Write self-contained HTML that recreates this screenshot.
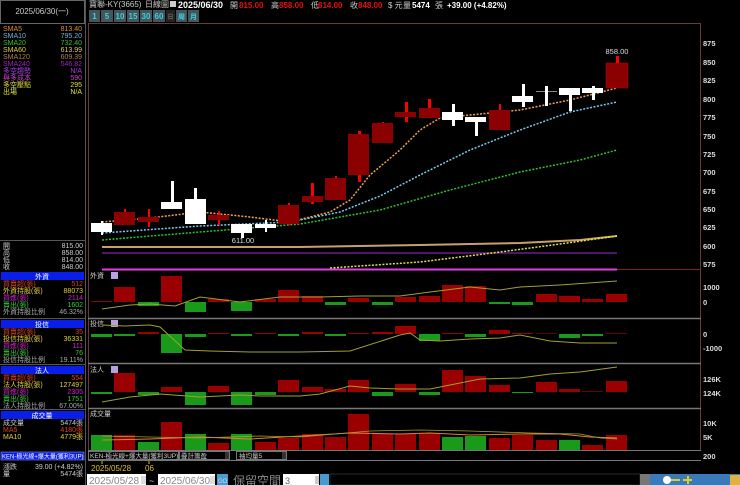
<!DOCTYPE html>
<html><head><meta charset="utf-8"><style>
body{margin:0;background:#000;width:740px;height:485px;overflow:hidden;font-family:"Liberation Sans","Noto Sans CJK TC",sans-serif;}
svg text{font-family:"Liberation Sans","Noto Sans CJK TC",sans-serif;}
</style></head><body>
<svg width="740" height="485" viewBox="0 0 740 485" xmlns="http://www.w3.org/2000/svg" style="position:absolute;left:0;top:0">
<rect width="740" height="485" fill="#000"/>
<!-- left panel borders -->
<rect x="0.5" y="0.5" width="84" height="23" fill="none" stroke="#666"/>
<text x="42" y="14" fill="#ccc" font-size="8" text-anchor="middle">2025/06/30(一)</text>
<line x1="85.5" y1="0" x2="85.5" y2="485" stroke="#555"/>
<line x1="0" y1="240.5" x2="85" y2="240.5" stroke="#555"/>
<g font-size="7">
<text x="3" y="31" fill="#e08a30">SMA5</text><text x="82" y="31" fill="#e08a30" text-anchor="end">813.40</text>
<text x="3" y="38" fill="#6fb6e0">SMA10</text><text x="82" y="38" fill="#6fb6e0" text-anchor="end">795.20</text>
<text x="3" y="45" fill="#30c030">SMA20</text><text x="82" y="45" fill="#30c030" text-anchor="end">732.40</text>
<text x="3" y="52" fill="#e0d040">SMA60</text><text x="82" y="52" fill="#e0d040" text-anchor="end">613.99</text>
<text x="3" y="59" fill="#b08050">SMA120</text><text x="82" y="59" fill="#b08050" text-anchor="end">609.39</text>
<text x="3" y="66" fill="#a020c0">SMA240</text><text x="82" y="66" fill="#a020c0" text-anchor="end">546.82</text>
<text x="3" y="73" fill="#a040e0">多空趨勢</text><text x="82" y="73" fill="#a040e0" text-anchor="end">N/A</text>
<text x="3" y="80" fill="#d040d0">與多成本</text><text x="82" y="80" fill="#d040d0" text-anchor="end">590</text>
<text x="3" y="87" fill="#e0e040">多空壓點</text><text x="82" y="87" fill="#e0e040" text-anchor="end">295</text>
<text x="3" y="94" fill="#e0e040">出場</text><text x="82" y="94" fill="#e0e040" text-anchor="end">N/A</text>
<text x="3" y="248" fill="#ccc">開</text><text x="83" y="248" fill="#ccc" text-anchor="end">815.00</text>
<text x="3" y="255" fill="#ccc">高</text><text x="83" y="255" fill="#ccc" text-anchor="end">858.00</text>
<text x="3" y="262" fill="#ccc">低</text><text x="83" y="262" fill="#ccc" text-anchor="end">814.00</text>
<text x="3" y="269" fill="#ccc">收</text><text x="83" y="269" fill="#ccc" text-anchor="end">848.00</text>
</g>
<!-- left sub sections -->
<g font-size="7">
<rect x="1" y="272" width="83" height="8" fill="#0a1ee8"/><text x="42" y="279" fill="#fff" text-anchor="middle">外資</text>
<text x="3" y="286" fill="#e04020">買賣超(張)</text><text x="83" y="286" fill="#e04020" text-anchor="end">512</text>
<text x="3" y="293" fill="#e0d040">外資持股(張)</text><text x="83" y="293" fill="#e0d040" text-anchor="end">88073</text>
<text x="3" y="300" fill="#d020d0">買進(張)</text><text x="83" y="300" fill="#d020d0" text-anchor="end">2114</text>
<text x="3" y="307" fill="#30d030">賣出(張)</text><text x="83" y="307" fill="#30d030" text-anchor="end">1602</text>
<text x="3" y="314" fill="#aaa">外資持股比例</text><text x="83" y="314" fill="#aaa" text-anchor="end">46.32%</text>
<line x1="0" y1="318.5" x2="85" y2="318.5" stroke="#555"/>
<rect x="1" y="320" width="83" height="8" fill="#0a1ee8"/><text x="42" y="327" fill="#fff" text-anchor="middle">投信</text>
<text x="3" y="334" fill="#e04020">買賣超(張)</text><text x="83" y="334" fill="#e04020" text-anchor="end">35</text>
<text x="3" y="341" fill="#e0d040">投信持股(張)</text><text x="83" y="341" fill="#e0d040" text-anchor="end">36331</text>
<text x="3" y="348" fill="#d020d0">買進(張)</text><text x="83" y="348" fill="#d020d0" text-anchor="end">111</text>
<text x="3" y="355" fill="#30d030">賣出(張)</text><text x="83" y="355" fill="#30d030" text-anchor="end">76</text>
<text x="3" y="362" fill="#aaa">投信持股比例</text><text x="83" y="362" fill="#aaa" text-anchor="end">19.11%</text>
<line x1="0" y1="364.5" x2="85" y2="364.5" stroke="#555"/>
<rect x="1" y="366" width="83" height="8" fill="#0a1ee8"/><text x="42" y="373" fill="#fff" text-anchor="middle">法人</text>
<text x="3" y="380" fill="#e04020">買賣超(張)</text><text x="83" y="380" fill="#e04020" text-anchor="end">554</text>
<text x="3" y="387" fill="#e0d040">法人持股(張)</text><text x="83" y="387" fill="#e0d040" text-anchor="end">127497</text>
<text x="3" y="394" fill="#d020d0">買進(張)</text><text x="83" y="394" fill="#d020d0" text-anchor="end">2305</text>
<text x="3" y="401" fill="#30d030">賣出(張)</text><text x="83" y="401" fill="#30d030" text-anchor="end">1751</text>
<text x="3" y="408" fill="#aaa">法人持股比例</text><text x="83" y="408" fill="#aaa" text-anchor="end">67.00%</text>
<line x1="0" y1="409.5" x2="85" y2="409.5" stroke="#555"/>
<rect x="1" y="411" width="83" height="8" fill="#0a1ee8"/><text x="42" y="418" fill="#fff" text-anchor="middle">成交量</text>
<text x="3" y="425" fill="#ccc">成交量</text><text x="83" y="425" fill="#ccc" text-anchor="end">5474張</text>
<text x="3" y="432" fill="#e04020">MA5</text><text x="83" y="432" fill="#e04020" text-anchor="end">4180張</text>
<text x="3" y="439" fill="#e0d040">MA10</text><text x="83" y="439" fill="#e0d040" text-anchor="end">4779張</text>
<rect x="1" y="452" width="83" height="8" fill="#0a1ee8" stroke="#88f" stroke-width="0.6"/><text x="2" y="458.5" fill="#fff" font-size="6">KEN-極光線+爆大量(獲利3UP)</text>
<text x="3" y="469" fill="#ccc">漲跌</text><text x="83" y="469" fill="#ccc" text-anchor="end">39.00 (+4.82%)</text>
<text x="3" y="476" fill="#ccc">量</text><text x="83" y="476" fill="#ccc" text-anchor="end">5474張</text>
</g>

<!-- title row -->
<g font-size="8">
<text x="89" y="7" fill="#ccc">寶聯-KY(3665)</text>
<text x="145" y="7" fill="#ccc">日線圖</text>
<rect x="170" y="1" width="6" height="6" fill="#ccc"/>
<text x="178" y="8" fill="#fff" font-weight="bold" font-size="9">2025/06/30</text>
<text x="230" y="8" fill="#ccc">開</text><text x="239" y="8" fill="#e01010" font-weight="bold">815.00</text>
<text x="271" y="8" fill="#ccc">高</text><text x="279" y="8" fill="#e01010" font-weight="bold">858.00</text>
<text x="311" y="8" fill="#ccc">低</text><text x="318" y="8" fill="#e01010" font-weight="bold">814.00</text>
<text x="350" y="8" fill="#ccc">收</text><text x="358" y="8" fill="#e01010" font-weight="bold">848.00</text>
<text x="388" y="8" fill="#ccc">$ 元</text>
<text x="403" y="8" fill="#ccc">量</text><text x="412" y="8" fill="#fff" font-weight="bold">5474</text>
<text x="435" y="8" fill="#ccc">張</text>
<text x="447" y="8" fill="#fff" font-weight="bold">+39.00 (+4.82%)</text>
</g>
<!-- buttons -->
<g font-size="8" font-weight="bold" text-anchor="middle">
<rect x="89" y="10" width="11" height="12" fill="#44555c"/><text x="94.5" y="19" fill="#3ad0e0">1</text>
<rect x="101" y="10" width="12" height="12" fill="#44555c"/><text x="107" y="19" fill="#3ad0e0">5</text>
<rect x="114" y="10" width="12" height="12" fill="#44555c"/><text x="120" y="19" fill="#3ad0e0">10</text>
<rect x="127" y="10" width="12" height="12" fill="#44555c"/><text x="133" y="19" fill="#3ad0e0">15</text>
<rect x="140" y="10" width="12" height="12" fill="#44555c"/><text x="146" y="19" fill="#3ad0e0">30</text>
<rect x="153" y="10" width="12" height="12" fill="#44555c"/><text x="159" y="19" fill="#3ad0e0">60</text>
<rect x="166" y="10" width="9" height="12" fill="#222"/><text x="170.5" y="19" fill="#666" font-size="6">日</text>
<rect x="176" y="10" width="11" height="12" fill="#44555c"/><text x="181.5" y="19" fill="#3ad0e0" font-size="7">周</text>
<rect x="188" y="10" width="11" height="12" fill="#44555c"/><text x="193.5" y="19" fill="#3ad0e0" font-size="7">月</text>
</g>

<!-- chart frame -->
<rect x="88.5" y="23.5" width="612" height="427" fill="none" stroke="#6a3a3a"/>
<line x1="88" y1="318.5" x2="701" y2="318.5" stroke="#777" stroke-width="1.5"/>
<line x1="88" y1="363.5" x2="701" y2="363.5" stroke="#777" stroke-width="1.5"/>
<line x1="88" y1="408.5" x2="701" y2="408.5" stroke="#777" stroke-width="1.5"/>
<line x1="88" y1="450.5" x2="701" y2="450.5" stroke="#777"/>
<line x1="88" y1="460.5" x2="701" y2="460.5" stroke="#777"/>
<!-- right axis -->
<g font-size="7.5" fill="#ddd" font-weight="bold">
<text x="703" y="46">875</text><text x="703" y="65">850</text><text x="703" y="83">825</text><text x="703" y="102">800</text><text x="703" y="120">775</text><text x="703" y="139">750</text><text x="703" y="157">725</text><text x="703" y="175">700</text><text x="703" y="194">675</text><text x="703" y="212">650</text><text x="703" y="230">625</text><text x="703" y="249">600</text><text x="703" y="267">575</text>
<text x="703" y="290">1000</text><text x="703" y="305">0</text>
<text x="703" y="337">0</text><text x="703" y="351">-1000</text>
<text x="703" y="382">126K</text><text x="703" y="396">124K</text>
<text x="703" y="426">10K</text><text x="703" y="440">5K</text><text x="703" y="459">200</text>
</g>

<!-- MA lines main -->
<line x1="102" y1="253" x2="617" y2="253" stroke="#6a1a8a" stroke-width="1.5"/>
<polyline points="102,247 300,247 420,245 520,243 580,240 617,236" fill="none" stroke="#c8a070" stroke-width="2"/>
<polyline points="330,268 420,262 500,252 560,244 617,236" fill="none" stroke="#e0e040" stroke-width="1.5" stroke-dasharray="2,1.5"/>
<polyline points="102,240 200,232 300,224 380,210 450,190 520,172 580,160 617,150" fill="none" stroke="#30c030" stroke-width="1.5" stroke-dasharray="2,1.5"/>
<polyline points="102,233 200,226 290,222 340,212 380,196 420,175 470,150 520,130 570,112 617,102" fill="none" stroke="#7ac8f0" stroke-width="1.5" stroke-dasharray="2,1.5"/>
<polyline points="102,222 150,218 200,212 250,217 290,222 330,212 350,200 370,175 400,150 420,130 440,118 470,115 520,110 570,100 617,88" fill="none" stroke="#f0a050" stroke-width="1.5" stroke-dasharray="2,1.5"/>
<line x1="102" y1="269.5" x2="617" y2="269.5" stroke="#e040e0" stroke-width="2"/>
<line x1="617" y1="269.5" x2="700" y2="269.5" stroke="#802020"/>

<!-- candles -->
<g>
<rect x="101" y="221" width="2" height="14" fill="#fff"/><rect x="91" y="223" width="21" height="9" fill="#fff"/>
<rect x="124" y="209" width="2" height="16" fill="#f00"/><rect x="114" y="212" width="21" height="13" fill="#8b0000"/>
<rect x="148" y="209" width="2" height="18" fill="#f00"/><rect x="138" y="217" width="21" height="5" fill="#8b0000"/>
<rect x="171" y="181" width="3" height="25" fill="#fff"/><rect x="161" y="202" width="21" height="7" fill="#fff"/>
<rect x="194" y="188" width="3" height="15" fill="#fff"/><rect x="185" y="199" width="21" height="25" fill="#fff"/>
<rect x="218" y="211" width="2" height="14" fill="#f00"/><rect x="208" y="215" width="21" height="5" fill="#8b0000"/>
<rect x="241" y="224" width="3" height="14" fill="#fff"/><rect x="231" y="224" width="21" height="9" fill="#fff"/>
<rect x="265" y="220" width="2" height="12" fill="#fff"/><rect x="255" y="224" width="21" height="4" fill="#fff"/>
<rect x="288" y="203" width="2" height="22" fill="#f00"/><rect x="278" y="205" width="21" height="19" fill="#8b0000"/>
<rect x="311" y="183" width="3" height="21" fill="#f00"/><rect x="302" y="196" width="21" height="6" fill="#8b0000"/>
<rect x="335" y="176" width="2" height="24" fill="#f00"/><rect x="325" y="178" width="21" height="22" fill="#8b0000"/>
<rect x="358" y="131" width="3" height="51" fill="#f00"/><rect x="348" y="134" width="21" height="41" fill="#8b0000"/>
<rect x="382" y="122" width="2" height="21" fill="#f00"/><rect x="372" y="123" width="21" height="20" fill="#8b0000"/>
<rect x="405" y="102" width="3" height="20" fill="#f00"/><rect x="395" y="112" width="21" height="5" fill="#8b0000"/>
<rect x="428" y="99" width="3" height="19" fill="#f00"/><rect x="419" y="108" width="21" height="10" fill="#8b0000"/>
<rect x="452" y="104" width="3" height="22" fill="#fff"/><rect x="442" y="112" width="21" height="8" fill="#fff"/>
<rect x="475" y="117" width="3" height="19" fill="#fff"/><rect x="465" y="117" width="21" height="5" fill="#fff"/>
<rect x="499" y="104" width="2" height="26" fill="#f00"/><rect x="489" y="110" width="21" height="20" fill="#8b0000"/>
<rect x="522" y="84" width="3" height="23" fill="#fff"/><rect x="512" y="96" width="21" height="6" fill="#fff"/>
<rect x="536" y="91" width="21" height="1" fill="#888"/><rect x="545" y="86" width="3" height="20" fill="#fff"/>
<rect x="569" y="88" width="3" height="23" fill="#fff"/><rect x="559" y="88" width="21" height="7" fill="#fff"/>
<rect x="592" y="86" width="3" height="14" fill="#fff"/><rect x="582" y="88" width="21" height="5" fill="#fff"/>
<rect x="616" y="56" width="3" height="8" fill="#f00"/><rect x="606" y="63" width="22" height="25" fill="#8b0000" stroke="#b00" stroke-width="0.5"/>
</g>
<text x="617" y="54" fill="#ddd" font-size="7.5" text-anchor="middle">858.00</text>
<text x="243" y="243" fill="#ddd" font-size="7.5" text-anchor="middle">611.00</text>

<!-- 外資 panel -->
<text x="90" y="278" fill="#ccc" font-size="7">外資</text><rect x="111" y="272" width="7" height="7" fill="#b9a0e0"/>
<g>
<rect x="91" y="301" width="21" height="1" fill="#8b0000"/>
<rect x="114" y="287" width="21" height="15" fill="#9a0000"/>
<rect x="138" y="302" width="21" height="4" fill="#1a9a1a"/>
<rect x="161" y="276" width="21" height="26" fill="#9a0000"/>
<rect x="185" y="302" width="21" height="10" fill="#1a9a1a"/>
<rect x="208" y="299" width="21" height="3" fill="#9a0000"/>
<rect x="231" y="302" width="21" height="9" fill="#1a9a1a"/>
<rect x="255" y="299" width="21" height="3" fill="#9a0000"/>
<rect x="278" y="290" width="21" height="12" fill="#9a0000"/>
<rect x="302" y="296" width="21" height="6" fill="#9a0000"/>
<rect x="325" y="302" width="21" height="3" fill="#1a9a1a"/>
<rect x="348" y="298" width="21" height="4" fill="#9a0000"/>
<rect x="372" y="302" width="21" height="3" fill="#1a9a1a"/>
<rect x="395" y="297" width="21" height="5" fill="#9a0000"/>
<rect x="419" y="296" width="21" height="6" fill="#9a0000"/>
<rect x="442" y="285" width="21" height="17" fill="#9a0000"/>
<rect x="465" y="286" width="21" height="16" fill="#9a0000"/>
<rect x="489" y="302" width="21" height="2" fill="#1a9a1a"/>
<rect x="512" y="302" width="21" height="3" fill="#1a9a1a"/>
<rect x="536" y="294" width="21" height="8" fill="#9a0000"/>
<rect x="559" y="296" width="21" height="6" fill="#9a0000"/>
<rect x="582" y="299" width="21" height="3" fill="#9a0000"/>
<rect x="606" y="294" width="21" height="8" fill="#9a0000"/>
</g>
<polyline points="102,309 130,305 150,304 175,306 200,297 240,302 280,297 320,297 360,296 400,296 430,292 470,287 500,290 520,287 560,285 617,281" fill="none" stroke="#a0a030" stroke-width="1"/>

<!-- 投信 panel -->
<text x="90" y="326" fill="#ccc" font-size="7">投信</text><rect x="111" y="320" width="7" height="7" fill="#b9a0e0"/>
<g>
<rect x="91" y="334" width="21" height="3" fill="#1a9a1a"/>
<rect x="114" y="334" width="21" height="2" fill="#1a9a1a"/>
<rect x="138" y="332" width="21" height="2" fill="#9a0000"/>
<rect x="161" y="334" width="21" height="19" fill="#1a9a1a"/>
<rect x="185" y="334" width="21" height="3" fill="#1a9a1a"/>
<rect x="208" y="333" width="21" height="1" fill="#9a0000"/>
<rect x="231" y="334" width="21" height="2" fill="#1a9a1a"/>
<rect x="255" y="333" width="21" height="1" fill="#9a0000"/>
<rect x="278" y="334" width="21" height="2" fill="#1a9a1a"/>
<rect x="302" y="332" width="21" height="2" fill="#9a0000"/>
<rect x="325" y="334" width="21" height="2" fill="#1a9a1a"/>
<rect x="348" y="333" width="21" height="1" fill="#9a0000"/>
<rect x="372" y="332" width="21" height="2" fill="#9a0000"/>
<rect x="395" y="326" width="21" height="8" fill="#9a0000"/>
<rect x="419" y="334" width="21" height="7" fill="#1a9a1a"/>
<rect x="442" y="333" width="21" height="1" fill="#9a0000"/>
<rect x="465" y="334" width="21" height="3" fill="#1a9a1a"/>
<rect x="489" y="330" width="21" height="4" fill="#9a0000"/>
<rect x="512" y="333" width="21" height="1" fill="#9a0000"/>
<rect x="536" y="333" width="21" height="1" fill="#5a0000"/>
<rect x="559" y="334" width="21" height="4" fill="#1a9a1a"/>
<rect x="582" y="334" width="21" height="2" fill="#1a9a1a"/>
<rect x="606" y="333" width="21" height="1" fill="#6a0000"/>
</g>
<polyline points="102,325 125,326 150,325 160,327 185,350 210,351 250,352 300,352 350,351 400,335 410,333 420,340 440,341 470,339 500,338 520,335 550,341 580,343 617,343" fill="none" stroke="#a0a030" stroke-width="1"/>

<!-- 法人 panel -->
<text x="90" y="372" fill="#ccc" font-size="7">法人</text><rect x="111" y="366" width="7" height="7" fill="#b9a0e0"/>
<g>
<rect x="91" y="392" width="21" height="2" fill="#1a9a1a"/>
<rect x="114" y="373" width="21" height="19" fill="#9a0000"/>
<rect x="138" y="392" width="21" height="3" fill="#1a9a1a"/>
<rect x="161" y="387" width="21" height="5" fill="#9a0000"/>
<rect x="185" y="392" width="21" height="13" fill="#1a9a1a"/>
<rect x="208" y="386" width="21" height="6" fill="#9a0000"/>
<rect x="231" y="392" width="21" height="13" fill="#1a9a1a"/>
<rect x="255" y="392" width="21" height="3" fill="#1a9a1a"/>
<rect x="278" y="380" width="21" height="12" fill="#9a0000"/>
<rect x="302" y="387" width="21" height="5" fill="#9a0000"/>
<rect x="325" y="389" width="21" height="3" fill="#9a0000"/>
<rect x="348" y="380" width="21" height="12" fill="#9a0000"/>
<rect x="372" y="392" width="21" height="4" fill="#1a9a1a"/>
<rect x="395" y="384" width="21" height="8" fill="#9a0000"/>
<rect x="419" y="392" width="21" height="3" fill="#1a9a1a"/>
<rect x="442" y="370" width="21" height="22" fill="#9a0000"/>
<rect x="465" y="376" width="21" height="16" fill="#9a0000"/>
<rect x="489" y="385" width="21" height="7" fill="#9a0000"/>
<rect x="512" y="392" width="21" height="1" fill="#1a9a1a"/>
<rect x="536" y="382" width="21" height="10" fill="#9a0000"/>
<rect x="559" y="389" width="21" height="3" fill="#9a0000"/>
<rect x="582" y="391" width="21" height="1" fill="#6a0000"/>
<rect x="606" y="381" width="21" height="11" fill="#9a0000"/>
</g>
<polyline points="102,402 130,397 160,394 200,397 240,395 260,396 300,396 320,394 350,386 370,388 400,389 430,389 450,385 480,379 520,378 550,374 580,372 617,367" fill="none" stroke="#a0a030" stroke-width="1"/>

<!-- 成交量 panel -->
<text x="90" y="416" fill="#ccc" font-size="7">成交量</text>
<g>
<rect x="91" y="435" width="21" height="15" fill="#1a9a1a"/>
<rect x="114" y="435" width="21" height="15" fill="#9a0000"/>
<rect x="138" y="442" width="21" height="8" fill="#1a9a1a"/>
<rect x="161" y="422" width="21" height="28" fill="#9a0000"/>
<rect x="185" y="434" width="21" height="16" fill="#1a9a1a"/>
<rect x="208" y="443" width="21" height="7" fill="#9a0000"/>
<rect x="231" y="434" width="21" height="16" fill="#1a9a1a"/>
<rect x="255" y="442" width="21" height="8" fill="#9a0000"/>
<rect x="278" y="438" width="21" height="12" fill="#9a0000"/>
<rect x="302" y="434" width="21" height="16" fill="#9a0000"/>
<rect x="325" y="437" width="21" height="13" fill="#9a0000"/>
<rect x="348" y="414" width="21" height="36" fill="#9a0000"/>
<rect x="372" y="434" width="21" height="16" fill="#9a0000"/>
<rect x="395" y="434" width="21" height="16" fill="#9a0000"/>
<rect x="419" y="433" width="21" height="17" fill="#9a0000"/>
<rect x="442" y="437" width="21" height="13" fill="#1a9a1a"/>
<rect x="465" y="436" width="21" height="14" fill="#1a9a1a"/>
<rect x="489" y="438" width="21" height="12" fill="#9a0000"/>
<rect x="512" y="435" width="21" height="15" fill="#9a0000"/>
<rect x="536" y="440" width="21" height="10" fill="#9a0000"/>
<rect x="559" y="440" width="21" height="10" fill="#1a9a1a"/>
<rect x="582" y="445" width="21" height="5" fill="#9a0000"/>
<rect x="606" y="435" width="21" height="15" fill="#9a0000"/>
</g>
<polyline points="102,440 150,439 200,437 250,439 300,436 350,433 400,434 430,433 470,435 520,434 560,434 590,437 617,438" fill="none" stroke="#e08030" stroke-width="1"/>
<polyline points="102,436 150,437 200,438 260,436 300,437 370,431 420,430 470,431 530,433 580,434 600,438 617,439" fill="none" stroke="#a0a030" stroke-width="0.8"/>

<!-- KEN row -->
<g font-size="6.5">
<rect x="88.5" y="451.5" width="90" height="8" fill="none" stroke="#777"/>
<text x="90" y="458" fill="#ccc">KEN-極光線+爆大量(獲利3UP)</text>
<rect x="179.5" y="451.5" width="50" height="8" fill="none" stroke="#777"/><text x="181" y="458" fill="#ccc">疊計籌盈</text>
<rect x="225" y="452" width="4" height="7" fill="#333"/>
<rect x="236.5" y="451.5" width="50" height="8" fill="none" stroke="#777"/><text x="239" y="458" fill="#ccc">袖均量5</text>
<rect x="282" y="452" width="4" height="7" fill="#333"/>
</g>
<line x1="102" y1="461" x2="102" y2="464" stroke="#cc0"/><line x1="149" y1="461" x2="149" y2="464" stroke="#cc0"/>
<text x="91" y="471" fill="#e0c020" font-size="8">2025/05/28</text>
<text x="145" y="471" fill="#e0c020" font-size="8">06</text>

<!-- bottom row -->
<rect x="87" y="474" width="59" height="11" fill="#fff"/><text x="89" y="484" fill="#888" font-size="10">2025/05/28</text>
<rect x="141" y="476" width="5" height="8" fill="#ddd"/>
<text x="149" y="484" fill="#ccc" font-size="9">~</text>
<rect x="158" y="474" width="57" height="11" fill="#fff"/><text x="160" y="484" fill="#888" font-size="10">2025/06/30</text>
<rect x="210" y="476" width="5" height="8" fill="#ddd"/>
<rect x="217" y="474" width="11" height="11" fill="#4a9ad0"/><text x="218" y="483" fill="#cde" font-size="6">GO</text>
<text x="233" y="485" fill="#888" font-size="12">保留空間</text>
<rect x="283" y="474" width="36" height="11" fill="#fff"/><text x="285" y="484" fill="#666" font-size="9">3</text>
<rect x="315" y="476" width="4" height="8" fill="#ccc"/>
<rect x="320" y="474" width="9" height="11" fill="#4a9ad0"/>
<rect x="330" y="474" width="310" height="11" fill="#000" stroke="#555" stroke-width="0.5"/>
<rect x="640" y="474" width="10" height="11" fill="#777"/>
<rect x="650" y="474" width="90" height="11" fill="#3a7ab8"/>
<circle cx="667" cy="480" r="4" fill="#fff"/><rect x="671" y="479" width="9" height="2" fill="#e0d020"/><rect x="683" y="479" width="9" height="2" fill="#e0d020"/><rect x="687" y="476" width="2" height="8" fill="#e0d020"/>
<rect x="730" y="475" width="10" height="10" fill="#e0b040"/>
</svg>
</body></html>
